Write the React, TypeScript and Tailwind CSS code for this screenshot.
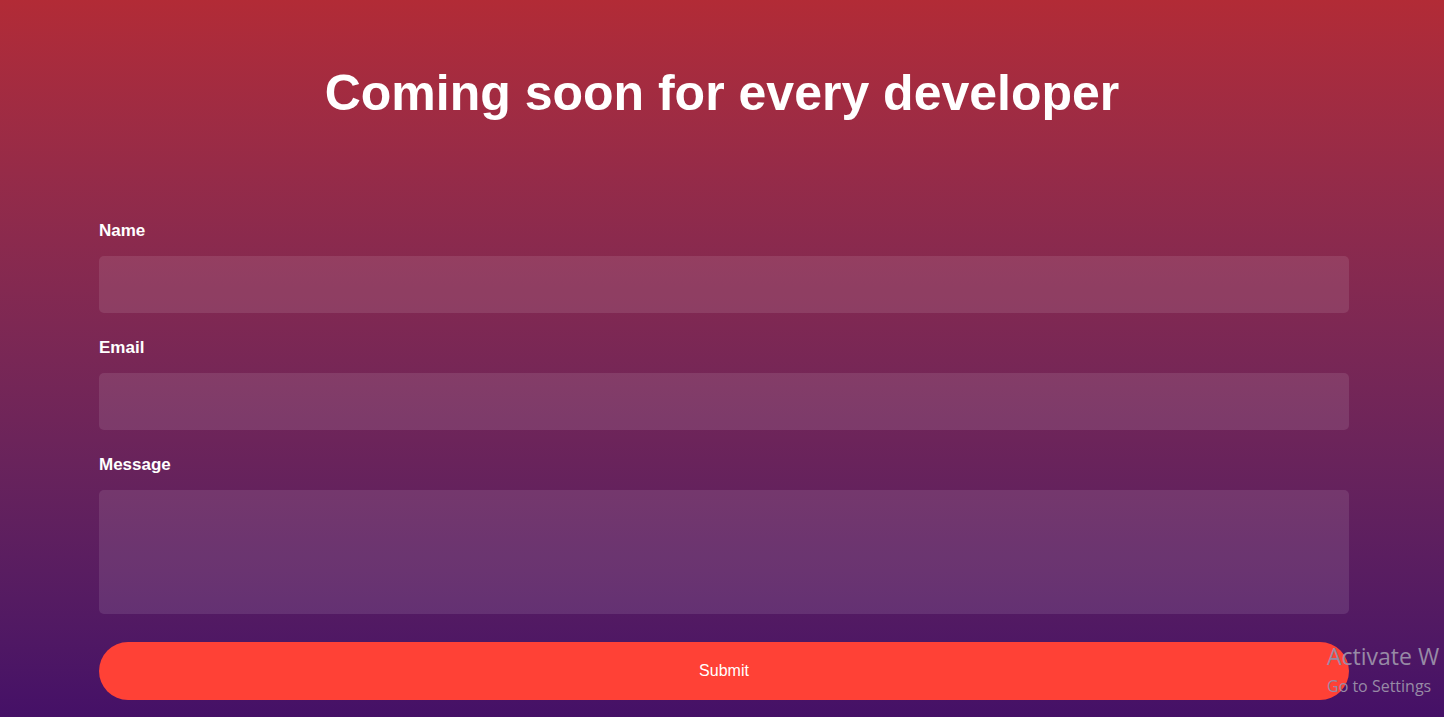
import React from "react";

export default function App() {
  return (
    <div
      className="relative h-screen w-full overflow-hidden bg-gradient-to-b from-[#b22b36] to-[#451067] text-white"
      style={{ fontFamily: '"Liberation Sans", Arial, sans-serif' }}
    >
      <h1 className="pt-[65px] text-center text-[50px] font-bold leading-[57px] text-white">
        Coming soon for every developer
      </h1>

      <form className="ml-[99px] mt-[99px] w-[1250px]" onSubmit={(e) => e.preventDefault()}>
        <label className="block text-[17px] font-bold leading-[20px]">Name</label>
        <input
          type="text"
          className="mt-[15px] block h-[57px] w-full rounded-[5px] bg-white/10 px-4 text-white outline-none"
        />

        <label className="mt-[25px] block text-[17px] font-bold leading-[20px]">Email</label>
        <input
          type="email"
          className="mt-[15px] block h-[57px] w-full rounded-[5px] bg-white/10 px-4 text-white outline-none"
        />

        <label className="mt-[25px] block text-[17px] font-bold leading-[20px]">Message</label>
        <textarea className="mt-[15px] block h-[124px] w-full resize-none rounded-[5px] bg-white/10 px-4 py-3 text-white outline-none" />

        <button
          type="submit"
          className="mt-[28px] block h-[58px] w-full rounded-full bg-[#ff4136] text-[16px] text-white"
        >
          Submit
        </button>
      </form>

      <div
        className="pointer-events-none absolute left-[1327px] top-[640px] whitespace-nowrap text-[#978aa5]"
        style={{ fontFamily: '"Open Sans", "Noto Sans", sans-serif' }}
      >
        <div className="text-[23px] leading-[33px]">Activate W</div>
        <div className="text-[16px] leading-[26px]">Go to Settings</div>
      </div>
    </div>
  );
}
